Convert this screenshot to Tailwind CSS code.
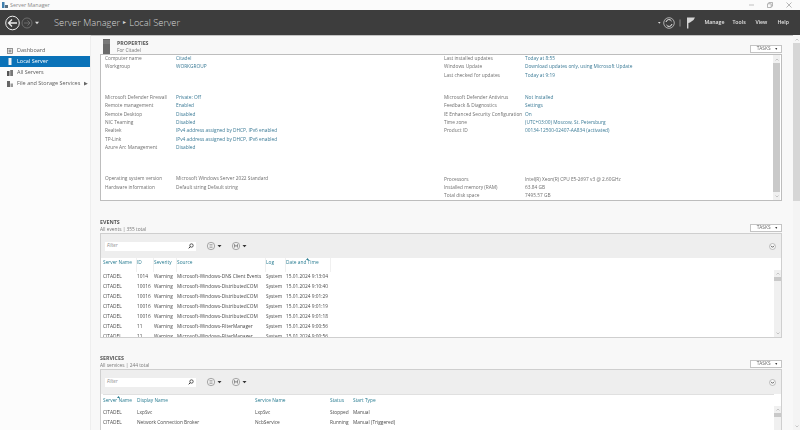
<!DOCTYPE html>
<html lang="en">
<head>
<meta charset="UTF-8">
<title>Server Manager</title>
<script src="https://cdn.jsdelivr.net/npm/@tailwindcss/browser@4"></script>
</head>
<body class="font-['Open_Sans',sans-serif] text-[4.8px] text-[#6f6f6f] bg-white overflow-hidden whitespace-nowrap">
<div class="w-[800px] h-[430px] flex flex-col overflow-hidden blur-[0.3px]">

  <!-- title bar -->
  <div class="h-[10px] flex items-center pl-[2px] bg-[#fbfbfb] text-[5.4px] text-[#8a8a8a]">
    <svg width="6" height="7" viewBox="0 0 6 7" class="mr-[2px]"><rect x="0" y="0" width="2.5" height="6" fill="#3f7fae"/><rect x="3" y="3" width="3" height="3" fill="#5a6f80"/></svg>
    <span>Server Manager</span>
    <div class="ml-auto flex items-center">
      <svg width="6" height="6" viewBox="0 0 6 6" class="mr-[12px]"><path d="M0 3h5" stroke="#aaa" stroke-width=".7"/></svg>
      <svg width="6" height="6" viewBox="0 0 6 6" class="mr-[13px]"><path d="M.5 1.8h3.7v3.7H.5zM1.8 1.8V.5h3.7v3.7H4.2" fill="none" stroke="#999" stroke-width=".7"/></svg>
      <svg width="6" height="6" viewBox="0 0 6 6" class="mr-[8px]"><path d="M.5.5l5 5M5.5.5l-5 5" stroke="#999" stroke-width=".7"/></svg>
    </div>
  </div>

  <!-- dark header -->
  <div class="h-[25px] bg-[#3d3d3d] flex items-center text-[#d8d8d8]">
    <svg width="42" height="18" viewBox="0 0 42 18" class="ml-[4px]">
      <circle cx="8.5" cy="9" r="6.8" fill="none" stroke="#eee" stroke-width="1"/>
      <path d="M13 9H5M8 5.500L4.500 9 8 12.500" fill="none" stroke="#eee" stroke-width="1.3"/>
      <circle cx="23" cy="9" r="5" fill="none" stroke="#777" stroke-width=".8"/>
      <path d="M20 9h5.500M23.500 6.500L26 9l-2.500 2.500" fill="none" stroke="#777" stroke-width=".8"/>
      <path d="M31 7.800h4l-2 2.400z" fill="#ddd"/>
    </svg>
    <span class="ml-[8px] text-[9.3px] font-light">Server Manager</span>
    <span class="ml-[3px] text-[6px]">▸</span>
    <span class="ml-[3px] text-[9.3px] font-light">Local Server</span>
    <svg width="44" height="16" viewBox="0 0 44 16" class="ml-auto mr-[5px]">
      <path d="M3 7h2.600L4.300 8.800z" fill="#ddd"/>
      <circle cx="14" cy="8" r="5.3" fill="none" stroke="#ddd" stroke-width=".7"/>
      <path d="M11 7a3 3 0 0 1 5.500-1M17 9a3 3 0 0 1-5.500 1" fill="none" stroke="#eee" stroke-width="1"/>
      <path d="M25 4.500v7" stroke="#aaa" stroke-width=".7"/>
      <path d="M32 2.500h8l-1.500 2.500-3.500 2.500-1.600.6v5.500h-1.400z" fill="#d5d5d5"/>
    </svg>
    <div class="flex font-semibold text-[5.2px] text-[#e2e2e2] mr-[11px]">
      <span class="w-[28px]">Manage</span>
      <span class="w-[23px]">Tools</span>
      <span class="w-[22px]">View</span>
      <span>Help</span>
    </div>
  </div>

  <div class="flex-1 flex min-h-0">
    <!-- sidebar -->
    <div class="w-[90px] shrink-0 pt-[9px] bg-[#fcfcfc] text-[5.5px] text-[#5c5c5c] border-t border-[#e4e4e4]">
      <div class="h-[11px] flex items-center pl-[7px] gap-[4px]">
        <svg width="6" height="6" viewBox="0 0 6 6"><rect x=".4" y=".4" width="5.2" height="5.2" fill="none" stroke="#666" stroke-width=".7"/><rect x="1.5" y="1.5" width="3" height="3" fill="#999"/></svg>
        <span>Dashboard</span>
      </div>
      <div class="h-[11px] flex items-center pl-[7px] gap-[4px] bg-[#0a72b8] text-white">
        <svg width="6" height="7" viewBox="0 0 6 7"><rect x="1.5" y="0" width="3" height="7" fill="#f4f4f4"/></svg>
        <span>Local Server</span>
      </div>
      <div class="h-[11px] flex items-center pl-[7px] gap-[4px]">
        <svg width="6" height="6" viewBox="0 0 6 6"><rect x="0" y="1" width="2.5" height="5" fill="#555"/><rect x="3.2" y="0" width="2.8" height="6" fill="#777"/></svg>
        <span>All Servers</span>
      </div>
      <div class="h-[11px] flex items-center pl-[7px] gap-[4px]">
        <svg width="6" height="6" viewBox="0 0 6 6"><rect x="0" y="0" width="3" height="6" fill="#666"/><rect x="3.5" y="2.5" width="2.5" height="3.5" fill="#999"/></svg>
        <span>File and Storage Services</span>
        <span class="text-[5px] text-[#666]">▶</span>
      </div>
    </div>

    <!-- main -->
    <div class="flex-1 min-w-0 bg-[#f8f8f8] border-t border-[#c4c4c4] pl-[9px] pr-[11px] border-l border-l-[#eeeeee]">
      <!-- properties -->
      <div class="h-[18px] flex items-end">
        <svg width="8" height="15" viewBox="0 0 8 15" class="ml-[3px]"><rect width="7" height="15" fill="#6a6a6a"/><path d="M0 2h7M0 4h7" stroke="#aaa" stroke-width=".5"/></svg>
        <div class="ml-[6px]">
          <div class="font-bold text-[5.3px] text-[#555] leading-[7px]">PROPERTIES</div>
          <div class="text-[#777] leading-[7px]">For Citadel</div>
        </div>
        <div class="ml-auto mb-[1px] w-[32px] h-[8px] border border-[#c4c4c4] bg-white flex items-center justify-end pr-[3px] gap-[4px] text-[#666]">TASKS <span class="text-[3.5px] text-[#333]">▼</span></div>
      </div>
      <div class="h-[147px] bg-white border border-[#bdbdbd] flex overflow-hidden">
        <div class="flex-1 flex pl-[4px] leading-[7px]">
          <div class="w-[339px]">
            <div class="flex h-[8.33px]"><span class="w-[71px]">Computer name</span><span class="text-[#3a7a96]">Citadel</span></div>
            <div class="flex h-[8.33px]"><span class="w-[71px]">Workgroup</span><span class="text-[#3a7a96]">WORKGROUP</span></div>
            <div class="h-[22.4px]"></div>
            <div class="flex h-[8.33px]"><span class="w-[71px]">Microsoft Defender Firewall</span><span class="text-[#3a7a96]">Private: Off</span></div>
            <div class="flex h-[8.33px]"><span class="w-[71px]">Remote management</span><span class="text-[#3a7a96]">Enabled</span></div>
            <div class="flex h-[8.33px]"><span class="w-[71px]">Remote Desktop</span><span class="text-[#3a7a96]">Disabled</span></div>
            <div class="flex h-[8.33px]"><span class="w-[71px]">NIC Teaming</span><span class="text-[#3a7a96]">Disabled</span></div>
            <div class="flex h-[8.33px]"><span class="w-[71px]">Realtek</span><span class="text-[#3a7a96]">IPv4 address assigned by DHCP, IPv6 enabled</span></div>
            <div class="flex h-[8.33px]"><span class="w-[71px]">TP-Link</span><span class="text-[#3a7a96]">IPv4 address assigned by DHCP, IPv6 enabled</span></div>
            <div class="flex h-[8.33px]"><span class="w-[71px]">Azure Arc Management</span><span class="text-[#3a7a96]">Disabled</span></div>
            <div class="h-[22.9px]"></div>
            <div class="flex h-[8.33px]"><span class="w-[71px]">Operating system version</span><span>Microsoft Windows Server 2022 Standard</span></div>
            <div class="flex h-[8.33px]"><span class="w-[71px]">Hardware information</span><span>Default string Default string</span></div>
          </div>
          <div class="flex-1">
            <div class="flex h-[8.33px]"><span class="w-[81px]">Last installed updates</span><span class="text-[#3a7a96]">Today at 8:55</span></div>
            <div class="flex h-[8.33px]"><span class="w-[81px]">Windows Update</span><span class="text-[#3a7a96]">Download updates only, using Microsoft Update</span></div>
            <div class="flex h-[8.33px]"><span class="w-[81px]">Last checked for updates</span><span class="text-[#3a7a96]">Today at 9:19</span></div>
            <div class="h-[14.1px]"></div>
            <div class="flex h-[8.33px]"><span class="w-[81px]">Microsoft Defender Antivirus</span><span class="text-[#3a7a96]">Not Installed</span></div>
            <div class="flex h-[8.33px]"><span class="w-[81px]">Feedback &amp; Diagnostics</span><span class="text-[#3a7a96]">Settings</span></div>
            <div class="flex h-[8.33px]"><span class="w-[81px]">IE Enhanced Security Configuration</span><span class="text-[#3a7a96]">On</span></div>
            <div class="flex h-[8.33px]"><span class="w-[81px]">Time zone</span><span class="text-[#3a7a96]">(UTC+03:00) Moscow, St. Petersburg</span></div>
            <div class="flex h-[8.33px]"><span class="w-[81px]">Product ID</span><span class="text-[#3a7a96]">00134-12500-02407-AA834 (activated)</span></div>
            <div class="h-[39.9px]"></div>
            <div class="flex h-[8.33px]"><span class="w-[81px]">Processors</span><span>Intel(R) Xeon(R) CPU E5-2697 v3 @ 2.60GHz</span></div>
            <div class="flex h-[8.33px]"><span class="w-[81px]">Installed memory (RAM)</span><span>63.84 GB</span></div>
            <div class="flex h-[8.33px]"><span class="w-[81px]">Total disk space</span><span>7495.57 GB</span></div>
          </div>
        </div>
        <div class="w-[7px] flex flex-col bg-[#c9c9c9] mr-[1px]">
          <div class="h-[8px] bg-[#f0f0f0] flex items-center justify-center"><svg width="4" height="3" viewBox="0 0 4 3"><path d="M.5 2.500L2 1l1.500 1.500" fill="none" stroke="#999" stroke-width=".5"/></svg></div>
          <div class="flex-1"></div>
          <div class="h-[8px] bg-[#f0f0f0] flex items-center justify-center"><svg width="4" height="3" viewBox="0 0 4 3"><path d="M.5.500L2 2 3.500.5" fill="none" stroke="#999" stroke-width=".5"/></svg></div>
        </div>
      </div>

      <!-- events -->
      <div class="h-[32px] flex items-end">
        <div>
          <div class="font-bold text-[5.3px] text-[#555] leading-[7.5px]">EVENTS</div>
          <div class="text-[#777] leading-[7px]">All events | 355 total</div>
        </div>
        <div class="ml-auto mb-[1px] w-[32px] h-[8px] border border-[#c4c4c4] bg-white flex items-center justify-end pr-[3px] gap-[4px] text-[#666]">TASKS <span class="text-[3.5px] text-[#333]">▼</span></div>
      </div>
      <div class="h-[105px] bg-white border border-[#cfcfcf] flex flex-col overflow-hidden">
        <div class="h-[24px] shrink-0 bg-[#eeeeee] flex items-center pl-[4px] pr-[5px]">
          <div class="w-[91px] h-[9px] bg-white flex items-center pl-[2px] italic text-[#888]">Filter
            <svg width="6" height="6" viewBox="0 0 6 6" class="ml-auto mr-[2px]"><circle cx="3.500" cy="2.500" r="1.700" fill="none" stroke="#333" stroke-width=".8"/><path d="M2.300 3.700L.7 5.300" stroke="#333" stroke-width="1"/></svg>
          </div>
          <svg width="50" height="10" viewBox="0 0 50 10" class="ml-[10px]">
            <circle cx="5" cy="5" r="3.700" fill="none" stroke="#777" stroke-width=".6"/><path d="M3.500 3.500h3M3.500 5h3M3.500 6.500h3" stroke="#777" stroke-width=".5"/><path d="M11.500 4h4l-2 2.200z" fill="#333"/>
            <circle cx="30" cy="5" r="3.700" fill="none" stroke="#777" stroke-width=".6"/><path d="M28.500 6.500v-3l1.500 2 1.500-2v3" fill="none" stroke="#555" stroke-width=".6"/><path d="M36.500 4h4l-2 2.200z" fill="#333"/>
          </svg>
          <svg width="7" height="7" viewBox="0 0 7 7" class="ml-auto"><circle cx="3.500" cy="3.500" r="3" fill="#f8f8f8" stroke="#888" stroke-width=".5"/><path d="M2 2.800l1.500 1.500L5 2.800" fill="none" stroke="#333" stroke-width=".8"/></svg>
        </div>
        <div class="flex-1 flex min-h-0">
          <div class="flex-1 pl-[2px] text-[#4a4a4a]">
            <div class="relative h-[14px] flex leading-[9px] text-[#2a7d92]">
              <span class="w-[34px] border-r border-[#f0f0f0]">Server Name</span><span class="w-[17px] border-r border-[#f0f0f0]">ID</span><span class="w-[23px] border-r border-[#f0f0f0]">Severity</span><span class="w-[89px] border-r border-[#f0f0f0]">Source</span><span class="w-[20px] border-r border-[#f0f0f0]">Log</span><span class="w-[45px] border-r border-[#f0f0f0]">Date and Time</span>
              <svg width="3" height="2" viewBox="0 0 3 2" class="absolute left-[203px] top-0"><path d="M0 2l1.500-2L3 2z" fill="#2a7d92"/></svg>
            </div>
            <div class="h-[10px] flex items-center"><span class="w-[34px]">CITADEL</span><span class="w-[17px]">1014</span><span class="w-[23px]">Warning</span><span class="w-[89px]">Microsoft-Windows-DNS Client Events</span><span class="w-[20px]">System</span><span>15.01.2024 9:13:04</span></div>
            <div class="h-[10px] flex items-center"><span class="w-[34px]">CITADEL</span><span class="w-[17px]">10016</span><span class="w-[23px]">Warning</span><span class="w-[89px]">Microsoft-Windows-DistributedCOM</span><span class="w-[20px]">System</span><span>15.01.2024 9:10:40</span></div>
            <div class="h-[10px] flex items-center"><span class="w-[34px]">CITADEL</span><span class="w-[17px]">10016</span><span class="w-[23px]">Warning</span><span class="w-[89px]">Microsoft-Windows-DistributedCOM</span><span class="w-[20px]">System</span><span>15.01.2024 9:01:29</span></div>
            <div class="h-[10px] flex items-center"><span class="w-[34px]">CITADEL</span><span class="w-[17px]">10016</span><span class="w-[23px]">Warning</span><span class="w-[89px]">Microsoft-Windows-DistributedCOM</span><span class="w-[20px]">System</span><span>15.01.2024 9:01:19</span></div>
            <div class="h-[10px] flex items-center"><span class="w-[34px]">CITADEL</span><span class="w-[17px]">10016</span><span class="w-[23px]">Warning</span><span class="w-[89px]">Microsoft-Windows-DistributedCOM</span><span class="w-[20px]">System</span><span>15.01.2024 9:01:18</span></div>
            <div class="h-[10px] flex items-center"><span class="w-[34px]">CITADEL</span><span class="w-[17px]">11</span><span class="w-[23px]">Warning</span><span class="w-[89px]">Microsoft-Windows-FilterManager</span><span class="w-[20px]">System</span><span>15.01.2024 9:00:56</span></div>
            <div class="h-[10px] flex items-center"><span class="w-[34px]">CITADEL</span><span class="w-[17px]">11</span><span class="w-[23px]">Warning</span><span class="w-[89px]">Microsoft-Windows-FilterManager</span><span class="w-[20px]">System</span><span>15.01.2024 9:00:56</span></div>
          </div>
          <div class="w-[7px] mt-[12px] flex flex-col bg-[#f0f0f0]">
            <div class="h-[7px] flex items-center justify-center"><svg width="4" height="3" viewBox="0 0 4 3"><path d="M.5 2.500L2 1l1.500 1.500" fill="none" stroke="#999" stroke-width=".5"/></svg></div>
            <div class="h-[4px] bg-[#c9c9c9]"></div>
            <div class="flex-1"></div>
            <div class="h-[7px] flex items-center justify-center"><svg width="4" height="3" viewBox="0 0 4 3"><path d="M.5.500L2 2 3.500.5" fill="none" stroke="#999" stroke-width=".5"/></svg></div>
          </div>
        </div>
      </div>

      <!-- services -->
      <div class="h-[31px] flex items-end">
        <div>
          <div class="font-bold text-[5.3px] text-[#555] leading-[7.5px]">SERVICES</div>
          <div class="text-[#777] leading-[7px]">All services | 244 total</div>
        </div>
        <div class="ml-auto mb-[1px] w-[32px] h-[8px] border border-[#c4c4c4] bg-white flex items-center justify-end pr-[3px] gap-[4px] text-[#666]">TASKS <span class="text-[3.5px] text-[#333]">▼</span></div>
      </div>
      <div class="h-[70px] bg-white border border-[#cfcfcf] flex flex-col overflow-hidden">
        <div class="h-[24px] shrink-0 bg-[#eeeeee] flex items-center pl-[4px] pr-[5px]">
          <div class="w-[91px] h-[9px] bg-white flex items-center pl-[2px] italic text-[#888]">Filter
            <svg width="6" height="6" viewBox="0 0 6 6" class="ml-auto mr-[2px]"><circle cx="3.500" cy="2.500" r="1.700" fill="none" stroke="#333" stroke-width=".8"/><path d="M2.300 3.700L.7 5.300" stroke="#333" stroke-width="1"/></svg>
          </div>
          <svg width="50" height="10" viewBox="0 0 50 10" class="ml-[10px]">
            <circle cx="5" cy="5" r="3.700" fill="none" stroke="#777" stroke-width=".6"/><path d="M3.500 3.500h3M3.500 5h3M3.500 6.500h3" stroke="#777" stroke-width=".5"/><path d="M11.500 4h4l-2 2.200z" fill="#333"/>
            <circle cx="30" cy="5" r="3.700" fill="none" stroke="#777" stroke-width=".6"/><path d="M28.500 6.500v-3l1.500 2 1.500-2v3" fill="none" stroke="#555" stroke-width=".6"/><path d="M36.500 4h4l-2 2.200z" fill="#333"/>
          </svg>
          <svg width="7" height="7" viewBox="0 0 7 7" class="ml-auto"><circle cx="3.500" cy="3.500" r="3" fill="#f8f8f8" stroke="#888" stroke-width=".5"/><path d="M2 2.800l1.500 1.500L5 2.800" fill="none" stroke="#333" stroke-width=".8"/></svg>
        </div>
        <div class="flex-1 flex min-h-0">
          <div class="flex-1 pl-[2px] text-[#4a4a4a]">
            <div class="relative h-[14px] flex leading-[10px] text-[#2a7d92] border-t border-[#e0e0e0]">
              <span class="w-[34px]">Server Name</span><span class="w-[118px]">Display Name</span><span class="w-[75px]">Service Name</span><span class="w-[23px]">Status</span><span>Start Type</span>
              <svg width="3" height="2" viewBox="0 0 3 2" class="absolute left-[14px] top-[1px]"><path d="M0 2l1.500-2L3 2z" fill="#2a7d92"/></svg>
            </div>
            <div class="h-[10px] flex items-center"><span class="w-[34px]">CITADEL</span><span class="w-[118px]">LxpSvc</span><span class="w-[75px]">LxpSvc</span><span class="w-[23px]">Stopped</span><span>Manual</span></div>
            <div class="h-[10px] flex items-center"><span class="w-[34px]">CITADEL</span><span class="w-[118px]">Network Connection Broker</span><span class="w-[75px]">NcbService</span><span class="w-[23px]">Running</span><span>Manual (Triggered)</span></div>
          </div>
          <div class="w-[7px] mt-[12px] flex flex-col bg-[#f0f0f0]">
            <div class="h-[7px] flex items-center justify-center"><svg width="4" height="3" viewBox="0 0 4 3"><path d="M.5 2.500L2 1l1.500 1.500" fill="none" stroke="#999" stroke-width=".5"/></svg></div>
            <div class="h-[4px] bg-[#c9c9c9]"></div>
            <div class="flex-1"></div>
          </div>
        </div>
      </div>
    </div>

    <!-- page scrollbar -->
    <div class="w-[7px] shrink-0 flex flex-col bg-[#f4f4f4]">
      <div class="h-[8px] bg-[#f6f6f6] flex items-center justify-center"><svg width="4" height="3" viewBox="0 0 4 3"><path d="M.5 2.500L2 1l1.500 1.500" fill="none" stroke="#999" stroke-width=".5"/></svg></div>
      <div class="h-[158px] bg-[#d6d6d6]"></div>
      <div class="flex-1"></div>
      <div class="h-[8px] flex items-center justify-center"><svg width="4" height="3" viewBox="0 0 4 3"><path d="M.5.500L2 2 3.500.5" fill="none" stroke="#999" stroke-width=".5"/></svg></div>
    </div>
  </div>
</div>
</body>
</html>
